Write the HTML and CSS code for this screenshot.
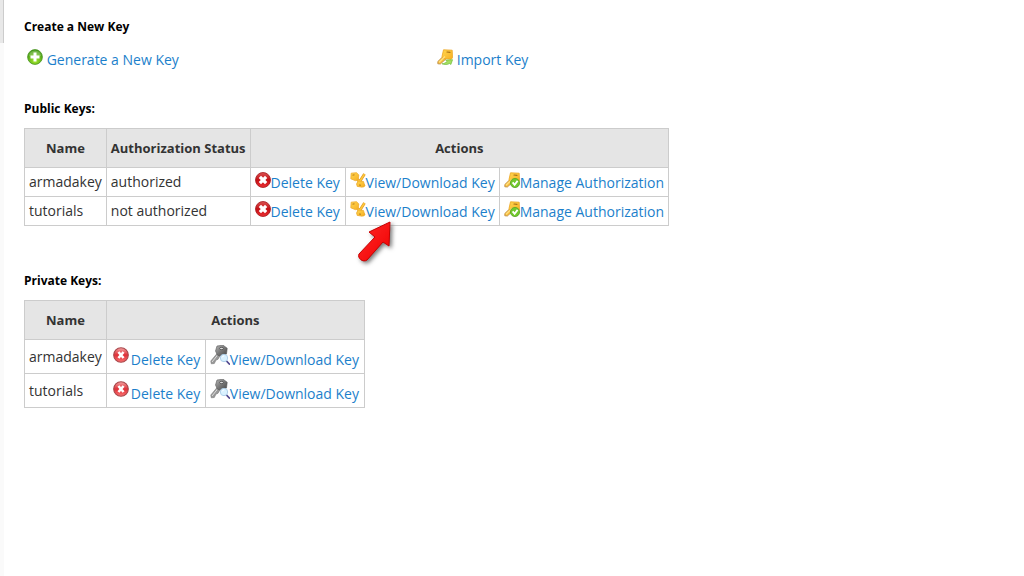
FILE: index.html
```html
<!DOCTYPE html>
<html lang="en">
<head>
  <meta charset="UTF-8">
  <meta name="viewport" content="width=device-width, initial-scale=1.0">
  <title>Manage SSH Keys</title>
  <link rel="stylesheet" href="styles.css">
</head>
<body>
<!-- shared icons -->
<svg class="sprite" aria-hidden="true">
  <defs>
    <radialGradient id="green" cx="50%" cy="75%" r="70%">
      <stop offset="0" stop-color="#a5e82c"/>
      <stop offset="1" stop-color="#3f9712"/>
    </radialGradient>
    <linearGradient id="red" x1="0" y1="0" x2="0" y2="1">
      <stop offset="0" stop-color="#dc5353"/>
      <stop offset=".5" stop-color="#c40f14"/>
      <stop offset="1" stop-color="#ec3034"/>
    </linearGradient>
    <linearGradient id="pale-red" x1="0" y1="0" x2="0" y2="1">
      <stop offset="0" stop-color="#f4a5a5"/>
      <stop offset=".5" stop-color="#df3038"/>
      <stop offset="1" stop-color="#fa7272"/>
    </linearGradient>
    <linearGradient id="gold" x1="0" y1="0" x2="1" y2="1">
      <stop offset="0" stop-color="#ffd64f"/>
      <stop offset="1" stop-color="#f7b024"/>
    </linearGradient>
    <linearGradient id="steel" x1="0" y1="0" x2="1" y2="1">
      <stop offset="0" stop-color="#b5b5b5"/>
      <stop offset=".5" stop-color="#777"/>
      <stop offset="1" stop-color="#444"/>
    </linearGradient>
    <linearGradient id="pointer" x1="0" y1="0" x2="1" y2="1">
      <stop offset="0" stop-color="#ff2b2b"/>
      <stop offset="1" stop-color="#f00000"/>
    </linearGradient>
  </defs>
  <symbol id="icon-add" viewBox="0 0 16 16">
    <circle cx="8" cy="8" r="7.4" fill="url(#green)" stroke="#4a9422" stroke-width=".8"/>
    <path d="M2 7a6 5.500 0 0 1 12 0q-6 2-12 0z" fill="#fff" opacity=".22"/>
    <path d="M6.500 3.500h3v3h3v3h-3v3h-3v-3h-3v-3h3z" fill="#fff"/>
  </symbol>
  <symbol id="icon-delete" viewBox="0 0 16 16">
    <circle cx="8" cy="8" r="7.500" fill="url(#red)" stroke="#a3161b" stroke-width=".8"/>
    <path d="M6 6l4 4M10 6l-4 4" stroke="#fff" stroke-width="3.200" stroke-linecap="square"/>
  </symbol>
  <symbol id="icon-remove" viewBox="0 0 20 20">
    <circle cx="10" cy="10" r="7.300" fill="url(#pale-red)" stroke="#a8474b" stroke-width="1.100"/>
    <path d="M8.300 8l3.400 4M11.700 8l-3.400 4" stroke="#fff" stroke-width="2.600" stroke-linecap="square"/>
  </symbol>
  <symbol id="gold-key" viewBox="0 0 16 16">
    <path d="M7 6.500L.8 12.500v2.300l2.600.2 6-5.500" fill="#f8bd3c" stroke="#b98a46" stroke-width=".8"/>
    <path d="M6.500.8l8.700.4.300 7.600-1.300 1.500-8.500-.8-.7-2z" fill="url(#gold)" stroke="#eca51f" stroke-width=".8" stroke-linejoin="round"/>
    <path d="M10 3l3 .3" stroke="#a87017" stroke-width="1.200" stroke-linecap="round"/>
    <path d="M2 13.200L8 7.500" stroke="#ffe183" stroke-width="1.200"/>
  </symbol>
  <symbol id="icon-import" viewBox="0 0 16 16">
    <use href="#gold-key"/>
    <path d="M5 14.800c2-.2 4-1.200 5-2.200l-1.200-1.500 6.800-.4-1.700 4.800-1.300-1c-2 1.300-5 1.500-7.600.3z" fill="#a5de60" stroke="#65b52f" stroke-width=".6"/>
  </symbol>
  <symbol id="icon-keys" viewBox="0 0 16 16">
    <path d="M6 6l8.500 8.500M14.500 2L7.500 13" stroke="#dc9826" stroke-width="2.800"/>
    <path d="M6 6l8.500 8.500M14.500 2L7.500 13" stroke="#ffc83c" stroke-width="1.500"/>
    <path d="M1.200 1.200l5.300-.5 2.300 2.200-.6 4.600-2.700 1.200L.8 6.800z" fill="url(#gold)" stroke="#edab2d" stroke-width=".8"/>
    <path d="M8 9l5.500.5 1 3.500-2 2.200-5.300-.8-.5-2.500z" fill="url(#gold)" stroke="#edab2d" stroke-width=".8"/>
    <path d="M2.500 3.200l2-.5M9 13l2 .2" stroke="#b87b1c" stroke-width="1.100"/>
  </symbol>
  <symbol id="icon-authorize" viewBox="0 0 16 16">
    <use href="#gold-key"/>
    <circle cx="11" cy="11" r="4.600" fill="#72c92d" stroke="#55a424" stroke-width=".8"/>
    <path d="M8.600 10.400l2 2.500 3-4" fill="none" stroke="#fff" stroke-width="1.800"/>
  </symbol>
  <symbol id="icon-view" viewBox="0 0 20 20">
    <path d="M7.500 8L.8 16l.5 2.800 3-.3L6 15l2-.7L11 9" fill="#999" stroke="#777" stroke-width=".6"/>
    <path d="M8 9.500l-6 7.500" stroke="#ddd" stroke-width="1"/>
    <path d="M7 1l6-.8 4.200 3-.7 5.700-3.500 2.600-5.500-1.200-2-4.300z" fill="url(#steel)" stroke="#555" stroke-width=".6"/>
    <ellipse cx="11.500" cy="3.500" rx="2" ry="1.100" fill="#ddd" stroke="#333" stroke-width=".6"/>
    <path d="M16 15.500l3.300 3.500" stroke="#50468e" stroke-width="1.800" stroke-linecap="round"/>
    <circle cx="14" cy="13" r="3.700" fill="#d9f1ff" stroke="#a9cce8" stroke-width=".9"/>
    <path d="M12 12.500a2 2 0 0 1 2-1.500" stroke="#fff" fill="none"/>
  </symbol>
</svg>

<div class="page">
  <div class="sidebar"><div class="sidebar-item"></div></div>
  <main class="content">
    <h4>Create a New Key</h4>
    <div class="key-links">
      <div class="key-link"><svg class="icon"><use href="#icon-add"/></svg> <a href="#">Generate a New Key</a></div>
      <div class="key-link"><svg class="icon"><use href="#icon-import"/></svg> <a href="#">Import Key</a></div>
    </div>

    <h4 id="public-title">Public Keys:</h4>
    <table class="public-keys" aria-labelledby="public-title">
      <thead>
        <tr><th>Name</th><th>Authorization Status</th><th colspan="3">Actions</th></tr>
      </thead>
      <tbody>
        <tr>
          <td>armadakey</td>
          <td>authorized</td>
          <td class="delete"><a href="#"><svg class="icon"><use href="#icon-delete"/></svg>Delete Key</a></td>
          <td class="view"><a href="#"><svg class="icon"><use href="#icon-keys"/></svg>View/Download Key</a></td>
          <td><a href="#"><svg class="icon"><use href="#icon-authorize"/></svg>Manage Authorization</a></td>
        </tr>
        <tr>
          <td>tutorials</td>
          <td>not authorized</td>
          <td class="delete"><a href="#"><svg class="icon"><use href="#icon-delete"/></svg>Delete Key</a></td>
          <td class="view pointed"><a href="#"><svg class="icon"><use href="#icon-keys"/></svg>View/Download Key</a>
            <svg class="arrow" viewBox="0 0 44 48" aria-hidden="true">
              <path d="M34 3L13 13l6 5L3 35c-2 4 4 9 8 6l16-18 6 4z" fill="url(#pointer)" stroke="#c80000" stroke-width="1" stroke-linejoin="round"/>
            </svg>
          </td>
          <td><a href="#"><svg class="icon"><use href="#icon-authorize"/></svg>Manage Authorization</a></td>
        </tr>
      </tbody>
    </table>

    <h4 id="private-title">Private Keys:</h4>
    <table class="private-keys" aria-labelledby="private-title">
      <thead>
        <tr><th>Name</th><th colspan="2">Actions</th></tr>
      </thead>
      <tbody>
        <tr>
          <td>armadakey</td>
          <td class="delete"><a href="#"><svg class="icon large"><use href="#icon-remove"/></svg>Delete Key</a></td>
          <td class="view"><a href="#"><svg class="icon large"><use href="#icon-view"/></svg>View/Download Key</a></td>
        </tr>
        <tr>
          <td>tutorials</td>
          <td class="delete"><a href="#"><svg class="icon large"><use href="#icon-remove"/></svg>Delete Key</a></td>
          <td class="view"><a href="#"><svg class="icon large"><use href="#icon-view"/></svg>View/Download Key</a></td>
        </tr>
      </tbody>
    </table>
  </main>
</div>
</body>
</html>
```

FILE: styles.css
```css
body {
  margin: 0;
  background: #fff;
  color: #333;
  font-family: "Open Sans", "Liberation Sans", sans-serif;
  font-size: 14px;
  line-height: 20px;
}
.sprite {
  position: absolute;
  width: 0;
  height: 0;
}
.page {
  display: flex;
  min-height: 100vh;
}
.sidebar {
  flex: none;
  width: 4px;
  background: #fafafa;
}
.sidebar-item {
  height: 43px;
  box-sizing: border-box;
  background: #e8e8e8;
  border-right: 1px solid #ccc;
}
.content {
  flex: 1;
  padding: 17px 20px;
}
h4 {
  margin: 0 0 9px;
  color: #000;
  font-size: 12px;
  font-weight: bold;
  line-height: 20px;
}
a {
  color: #1c7fcb;
  text-decoration: none;
}
a:hover {
  text-decoration: underline;
}
.icon {
  width: 16px;
  height: 16px;
  vertical-align: baseline;
}
.icon.large {
  width: 20px;
  height: 20px;
}
.key-links {
  display: grid;
  grid-template-columns: 42% 1fr;
  column-gap: 1px;
  padding: 3px 3px 0;
  margin-bottom: 29px;
}
table {
  border-collapse: collapse;
  margin-bottom: 45px;
}
th, td {
  border: 1px solid #ccc;
  padding: 4px;
  line-height: 18px;
  text-align: left;
  white-space: nowrap;
}
th {
  height: 30px;
  background: #e5e5e5;
  font-size: 13px;
  font-weight: bold;
  text-align: center;
}
.public-keys .delete {
  width: 86px;
}
.private-keys .delete {
  width: 90px;
}
.private-keys .view {
  width: 150px;
}
.private-keys .delete, .private-keys .view {
  padding-top: 5px;
}
.pointed {
  position: relative;
}
.arrow {
  position: absolute;
  top: 22px;
  left: 10px;
  width: 44px;
  height: 48px;
  filter: drop-shadow(2px 2px 2px #777);
  pointer-events: none;
}
```
